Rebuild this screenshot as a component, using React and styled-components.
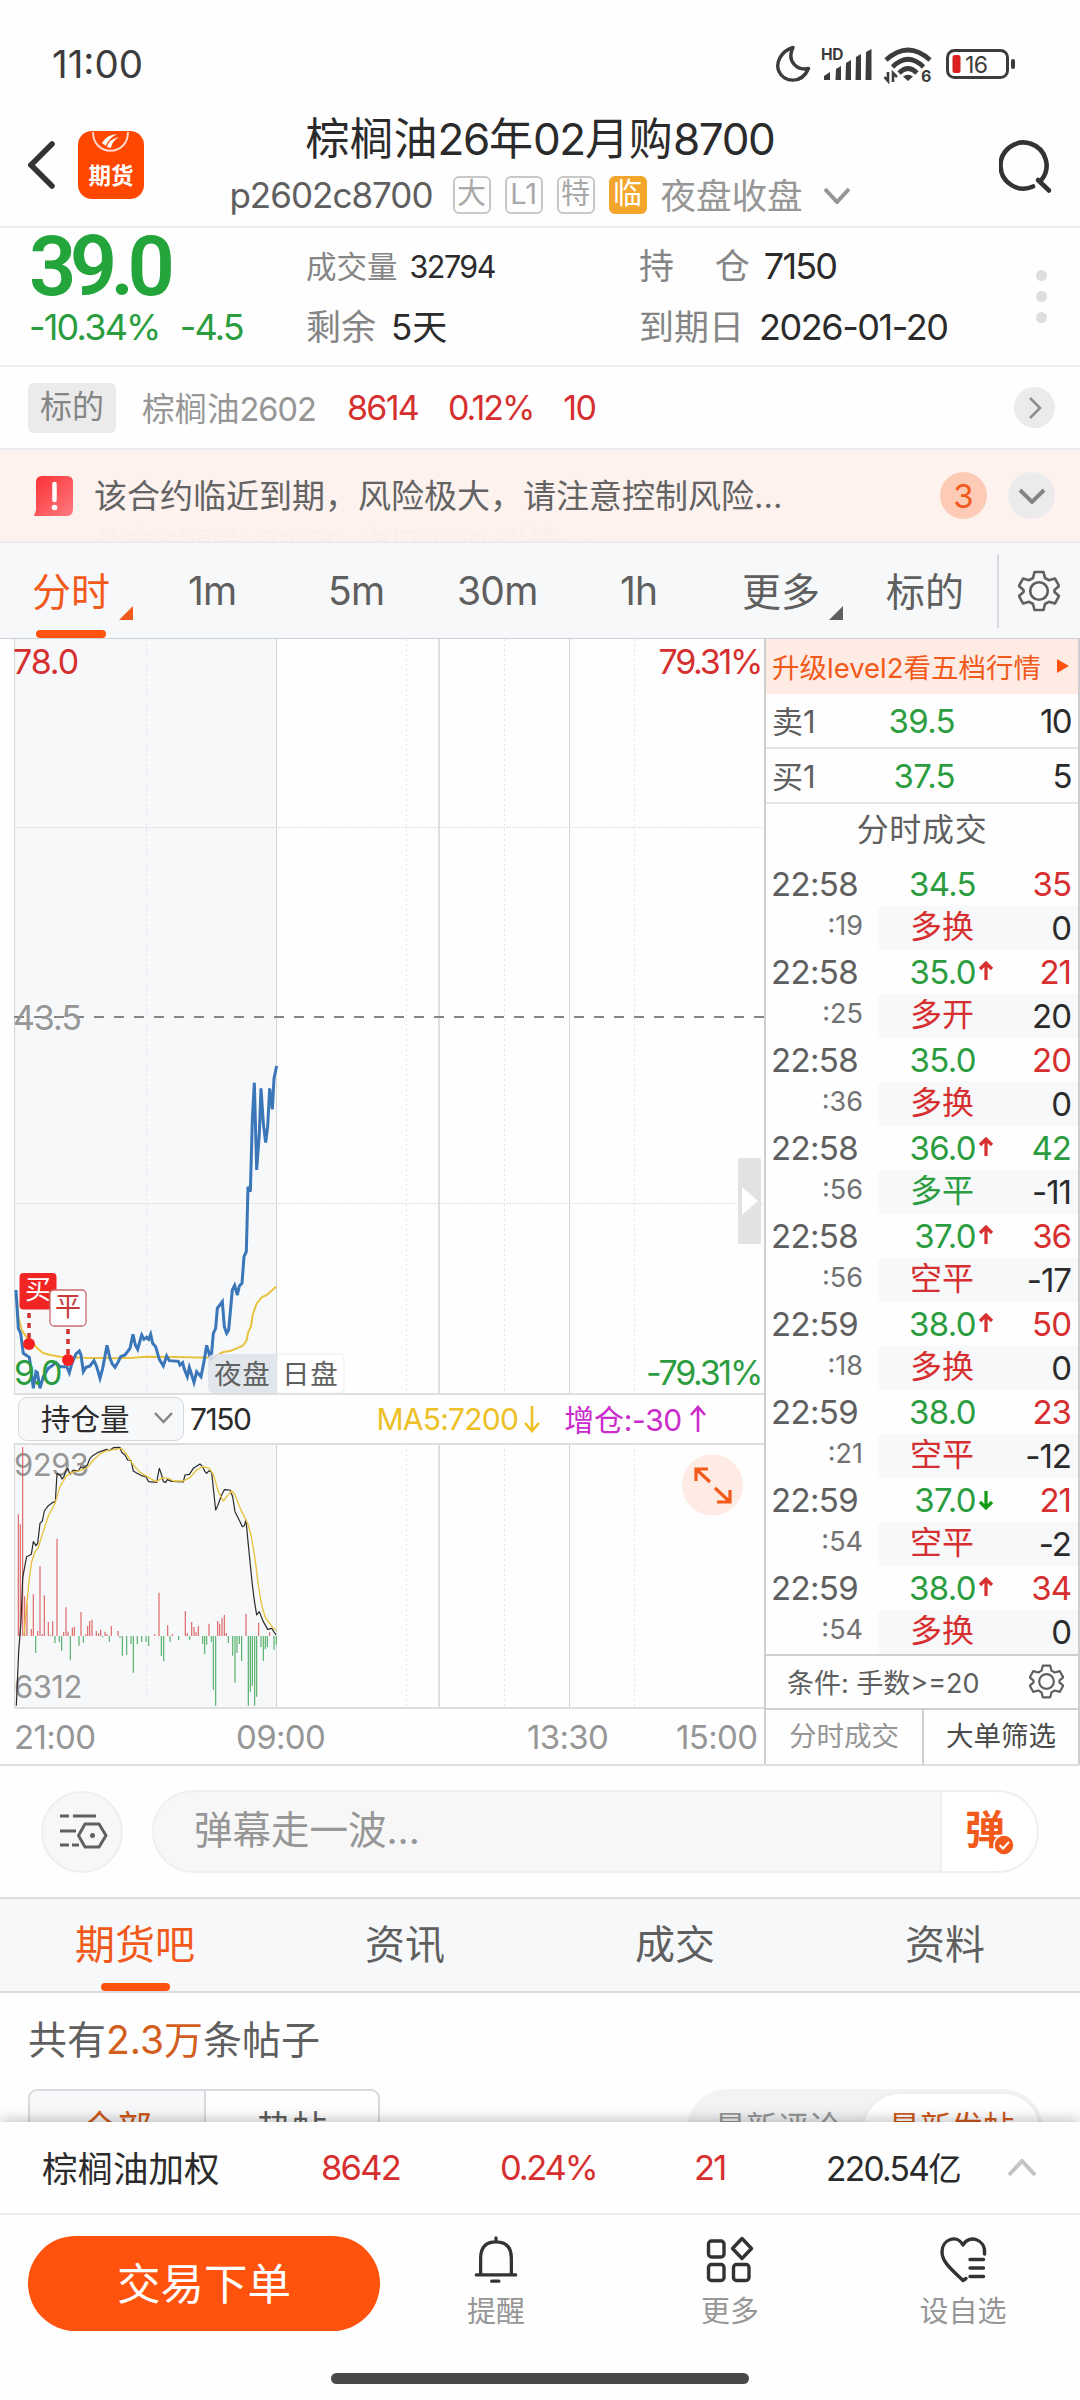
import styled, { createGlobalStyle, css } from "styled-components";

const GlobalStyle = createGlobalStyle`
  * {
    box-sizing: border-box;
  }
  body {
    margin: 0;
    background: #fefefe;
    font-family: Inter, "Noto Sans CJK SC", sans-serif;
    color: #2b2b2b;
  }
`;

const RED = "#d62f2f";
const GREEN = "#2b9d40";
const ORANGE = "#f25a1c";
const GRAY = "#969696";
const DARK = "#5f5f5f";
const BLACK = "#2b2b2b";

const Page = styled.div`
  width: 1080px;
  height: 2400px;
  overflow: hidden;
  display: flex;
  flex-direction: column;
`;

const Num = styled.span`
  font-size: ${({ $size }) => ($size ? `${$size}px` : "inherit")};
  letter-spacing: ${({ $ls }) => $ls ?? -0.05}em;
  color: ${({ $color }) => $color || "inherit"};
`;

/* ---------- status bar ---------- */

const StatusBar = styled.div`
  height: 110px;
  padding: 18px 65px 0 52px;
  display: flex;
  align-items: center;
  justify-content: space-between;
  color: #3c3c3c;
  font-size: 38.5px;
`;

/* ---------- header ---------- */

const Header = styled.header`
  height: 118px;
  display: grid;
  grid-template-columns: 200px 1fr 200px;
  border-bottom: 2px solid #ececec;
`;

const HeaderLeft = styled.div`
  display: flex;
  align-items: center;
  gap: 22px;
  padding: 0 0 6px 28px;
`;

const HeaderRight = styled.div`
  display: flex;
  align-items: center;
  justify-content: flex-end;
  padding: 0 27px 3px 0;
`;

const HeaderCenter = styled.div`
  display: flex;
  flex-direction: column;
  align-items: center;
`;

const Title = styled.div`
  font-size: 44px;
  line-height: 58px;
  white-space: nowrap;
`;

const SubTitle = styled.div`
  display: flex;
  align-items: center;
  height: 54px;
  font-size: 35px;
  color: ${GRAY};
  white-space: nowrap;
`;

const Session = styled.span`
  font-size: 35.5px;
  padding-bottom: 4px;
  margin-right: 20px;
`;

const Code = styled.span`
  color: ${DARK};
  margin-right: 20px;
  letter-spacing: -0.028em;
`;

const Badge = styled.span`
  width: 38px;
  height: 38px;
  margin-right: 14px;
  border: 2px solid ${({ $solid }) => ($solid ? "#f3a62c" : "#c8c8c8")};
  border-radius: 6px;
  background: ${({ $solid }) => ($solid ? "#f3a62c" : "transparent")};
  color: ${({ $solid }) => ($solid ? "#fff" : "#a8a8a8")};
  font-size: 29px;
  line-height: 32px;
  text-align: center;
`;

/* ---------- quote ---------- */

const Quote = styled.section`
  height: 139px;
  padding: 8px 31px 0 29px;
  display: grid;
  grid-template-columns: 277px 333px 1fr 13px;
  border-bottom: 2px solid #f0f0f0;
`;

const QuoteCol = styled.div`
  display: flex;
  flex-direction: column;
`;

const QuoteLine = styled.div`
  height: 61px;
  line-height: 61px;
  display: flex;
  align-items: center;
  white-space: nowrap;
  font-size: ${({ $size }) => $size || 35}px;
  color: ${({ $color }) => $color || BLACK};
  gap: ${({ $gap }) => $gap ?? 15}px;
`;

const Label = styled.span`
  color: #858585;
  word-spacing: 31px;
`;

const Price = styled.span`
  font-family: Roboto, sans-serif;
  font-weight: 600;
  font-size: 83px;
  letter-spacing: -0.08em;
  color: #23a53c;
`;

const Dots = styled.div`
  display: flex;
  flex-direction: column;
  gap: 10px;
  padding-top: 34px;
  i {
    width: 11px;
    height: 11px;
    border-radius: 50%;
    background: #dedede;
  }
`;

/* ---------- underlying row ---------- */

const Underlying = styled.div`
  height: 83px;
  padding: 0 25px 0 28px;
  display: flex;
  align-items: center;
  font-size: 34px;
  color: ${RED};
  border-bottom: 2px solid #ececec;
`;

const Tag = styled.span`
  width: 88px;
  height: 50px;
  line-height: 47px;
  text-align: center;
  border-radius: 6px;
  background: #ebebeb;
  color: #858585;
  font-size: 32px;
  margin-right: 26px;
`;

const UnderName = styled.span`
  color: ${GRAY};
  font-size: 32.5px;
  padding-bottom: 2px;
  margin-right: 31px;
`;

const Circle = styled.span`
  width: ${({ $size }) => $size}px;
  height: ${({ $size }) => $size}px;
  border-radius: 50%;
  background: ${({ $bg }) => $bg || "#ebebeb"};
  color: ${ORANGE};
  font-size: 33px;
  display: flex;
  align-items: center;
  justify-content: center;
  flex: none;
`;

const Spacer = styled.div`
  flex: 1;
`;

/* ---------- warning ---------- */

const Warning = styled.div`
  height: 93px;
  overflow: hidden;
  background: #fdf2ee;
  border-bottom: 2px solid #ecebea;
`;

const WarningLine = styled.div`
  height: 91px;
  padding: 0 25px 0 34px;
  display: flex;
  align-items: center;
  gap: 21px;
  white-space: nowrap;
`;

const WarningText = styled.span`
  padding-bottom: 3px;
  font-size: 33px;
  color: #636363;
`;

const NextWarning = styled.div`
  margin-top: -18px;
  padding-left: 95px;
  font-size: 31px;
  line-height: 40px;
  white-space: nowrap;
  color: #fceee9;
`;

/* ---------- period tabs ---------- */

const Periods = styled.nav`
  height: 96px;
  padding-left: 32px;
  display: flex;
  align-items: center;
  background: #f6f8fa;
  border-bottom: 1px solid #ccd0d4;
  font-size: 39px;
  color: ${DARK};
`;

const Period = styled.div`
  position: relative;
  width: ${({ $w }) => $w}px;
  padding-bottom: ${({ $latin }) => ($latin ? 0 : 4)}px;
  color: ${({ $active }) => ($active ? ORANGE : "inherit")};
  letter-spacing: ${({ $latin }) => ($latin ? -0.02 : 0)}em;
  white-space: nowrap;
  ${({ $corner }) =>
    $corner &&
    css`
      &::after {
        content: "";
        position: absolute;
        left: 87px;
        bottom: 1px;
        border: 7px solid transparent;
        border-right-color: currentColor;
        border-bottom-color: currentColor;
      }
    `}
  ${({ $active }) =>
    $active &&
    css`
      &::before {
        content: "";
        position: absolute;
        left: 4px;
        bottom: -17px;
        width: 70px;
        height: 8px;
        border-radius: 4px;
        background: #ff530d;
      }
    `}
`;

const PeriodGear = styled.div`
  height: 74px;
  width: 82px;
  display: flex;
  align-items: center;
  justify-content: center;
  border-left: 2px solid #d9dbde;
`;

/* ---------- chart ---------- */

const Trade = styled.section`
  height: 1127px;
  display: flex;
  border-bottom: 2px solid #e0e0e0;
`;

const ChartCol = styled.div`
  width: 764px;
  display: flex;
  flex-direction: column;
`;

const Svg = styled.svg`
  display: block;
  flex: none;
  font-family: Inter, "Noto Sans CJK SC", sans-serif;
`;

const IndexBar = styled.div`
  height: 48px;
  padding: 0 58px 0 18px;
  display: flex;
  align-items: center;
  font-size: 30px;
  white-space: nowrap;
`;

const Select = styled.div`
  width: 166px;
  height: 44px;
  margin-right: 6px;
  padding: 0 9px 4px 22px;
  display: flex;
  align-items: center;
  justify-content: space-between;
  border: 1px solid #d3d7dc;
  border-radius: 9px;
  background: #f6f8fa;
  font-size: 29.5px;
`;

const Times = styled.div`
  flex: 1;
  display: grid;
  grid-template-columns: 222px 291px 149px 1fr;
  padding-left: 14px;
  align-items: center;
  font-size: 33px;
  color: ${GRAY};
`;

/* ---------- order book ---------- */

const Book = styled.aside`
  width: 316px;
  border-left: 2px solid #cfcfcf;
  border-right: 2px solid #cfcfcf;
`;

const Promo = styled.div`
  height: 55px;
  padding: 0 8px 2px 6px;
  display: flex;
  align-items: center;
  justify-content: space-between;
  background: #feebe3;
  color: ${ORANGE};
  font-size: 27.5px;
  white-space: nowrap;
`;

const BookRow = styled.div`
  height: 55px;
  padding: 0 7px 0 6px;
  display: grid;
  grid-template-columns: 92px 91px 1fr;
  align-items: center;
  border-bottom: 2px solid #e5e5e5;
  font-size: 33px;
  text-align: right;
`;

const BookName = styled.span`
  color: ${DARK};
  font-size: 31px;
  padding-bottom: 2px;
  text-align: left;
`;

const BookTitle = styled.div`
  height: 58px;
  line-height: 52px;
  text-align: center;
  font-size: 32px;
  letter-spacing: 0.02em;
  color: ${DARK};
`;

const Tick = styled.div`
  height: 88px;
  display: grid;
  grid-template-columns: 112px 98px 20px 1fr;
  grid-template-rows: 44px 44px;
  align-items: center;
  font-size: 33px;
  text-align: right;
`;

const TickTime = styled.span`
  padding-left: 5px;
  text-align: left;
  color: ${DARK};
  letter-spacing: -0.02em;
`;

const TickSec = styled.span`
  padding: 0 15px 6px 0;
  font-size: 27px;
  color: #727272;
`;

const TickSide = styled.div`
  grid-column: 2 / 5;
  height: 44px;
  display: grid;
  grid-template-columns: 96px 1fr;
  align-items: center;
  border-radius: 6px 0 0 6px;
  background: #f6f8fa;
`;

const Side = styled.span`
  font-size: 32px;
  line-height: 40px;
  padding-bottom: 2px;
  color: ${({ $color }) => $color};
`;

const Amount = styled.span`
  padding-right: 7px;
  letter-spacing: -0.03em;
  color: ${({ $color }) => $color || BLACK};
`;

const TickPrice = styled.span`
  color: ${GREEN};
  letter-spacing: -0.02em;
`;

const Filter = styled.div`
  height: 54px;
  padding: 0 14px 2px 21px;
  display: flex;
  align-items: center;
  justify-content: space-between;
  border-top: 2px solid #cfcfcf;
  font-size: 27px;
  color: ${DARK};
`;

const FilterTabs = styled.div`
  height: 57px;
  display: grid;
  grid-template-columns: 1fr 1fr;
  border-top: 2px solid #cfcfcf;
`;

const FilterTab = styled.div`
  line-height: 53px;
  text-align: center;
  font-size: 27.5px;
  color: ${({ $active }) => ($active ? "#4a4a4a" : GRAY)};
  border-left: ${({ $active }) => ($active ? "2px solid #cfcfcf" : "none")};
`;

/* ---------- comment bar ---------- */

const CommentBar = styled.div`
  height: 131px;
  padding: 0 41px;
  display: flex;
  align-items: center;
  gap: 29px;
`;

const Round = styled.div`
  width: 82px;
  height: 82px;
  border-radius: 50%;
  border: 2px solid #efefef;
  background: #f7f7f7;
  display: flex;
  align-items: center;
  justify-content: center;
  padding-left: 3px;
`;

const Input = styled.div`
  flex: 1;
  height: 83px;
  display: flex;
  overflow: hidden;
  border: 2px solid #efefef;
  border-radius: 42px;
  background: #f7f7f7;
  font-size: 38.5px;
  line-height: 76px;
  color: ${GRAY};
  padding-left: 40px;
`;

const Bullet = styled.div`
  position: relative;
  width: 97px;
  padding-left: 23px;
  margin-left: auto;
  background: #fff;
  border-left: 2px solid #efefef;
  color: ${ORANGE};
  font-size: 40px;
  font-weight: 700;
  svg {
    position: absolute;
    left: 51px;
    top: 42px;
  }
`;

/* ---------- forum ---------- */

const ForumTabs = styled.nav`
  height: 96px;
  display: grid;
  grid-template-columns: repeat(4, 1fr);
  background: #f6f8fa;
  border-top: 2px solid #dcdcdc;
  border-bottom: 2px solid #dcdcdc;
`;

const ForumTab = styled.div`
  display: flex;
  flex-direction: column;
  align-items: center;
  justify-content: space-between;
  font-size: 40px;
  line-height: 92px;
  height: 92px;
  color: ${({ $active }) => ($active ? ORANGE : DARK)};
  &::after {
    content: "";
    width: 69px;
    height: 8px;
    margin-top: -10px;
    flex: none;
    border-radius: 4px;
    background: ${({ $active }) => ($active ? "#ff530d" : "transparent")};
  }
`;

const Forum = styled.section`
  height: 129px;
  padding: 0 37px 0 28px;
  overflow: hidden;
`;

const Count = styled.div`
  height: 96px;
  line-height: 93px;
  font-size: 39px;
  color: ${DARK};
  em {
    font-style: normal;
    color: #d35f1e;
  }
`;

const FilterRow = styled.div`
  display: flex;
  justify-content: space-between;
`;

const Segment = styled.div`
  width: 352px;
  height: 80px;
  display: grid;
  grid-template-columns: 176px 1fr;
  border: 2px solid #d8dadd;
  border-radius: 9px;
  overflow: hidden;
  font-size: 35px;
  line-height: 75px;
  text-align: center;
  color: ${DARK};
`;

const SegmentItem = styled.span`
  background: ${({ $active }) => ($active ? "#f6f8fa" : "transparent")};
  color: ${({ $active }) => ($active ? "#cf5a1c" : "inherit")};
  border-right: ${({ $active }) => ($active ? "2px solid #d8dadd" : "none")};
`;

const Toggle = styled.div`
  width: 356px;
  height: 80px;
  padding: 5px 4px;
  display: grid;
  grid-template-columns: 173px 175px;
  border-radius: 40px;
  background: #f1f3f5;
  font-size: 31.5px;
  line-height: 68px;
  text-align: center;
  color: ${GRAY};
`;

const ToggleItem = styled.span`
  border-radius: 36px;
  background: ${({ $active }) => ($active ? "#fff" : "transparent")};
  color: ${({ $active }) => ($active ? "#cf5a1c" : "inherit")};
  box-shadow: ${({ $active }) => ($active ? "0 0 6px rgba(0,0,0,.06)" : "none")};
`;

/* ---------- footer ---------- */

const Footer = styled.footer`
  position: relative;
  flex: 1;
  background: #fefefe;
  box-shadow: 0 -1px 14px rgba(0, 0, 0, 0.28);
`;

const IndexRow = styled.div`
  height: 93px;
  padding-left: 42px;
  display: grid;
  grid-template-columns: 279px 179px 194px 132px 181px 1fr;
  align-items: center;
  border-bottom: 2px solid #ececec;
  font-size: 34.5px;
  color: ${RED};
  white-space: nowrap;
`;

const IndexName = styled.span`
  color: ${BLACK};
  padding-bottom: 3px;
  font-size: ${({ $size }) => $size}px;
`;

const Actions = styled.div`
  height: 116px;
  padding: 21px 0 0 28px;
  display: grid;
  grid-template-columns: 352px 232px 236px 230px;
  align-items: start;
`;

const Order = styled.button`
  height: 95px;
  border: 0;
  padding: 0 0 5px;
  border-radius: 48px;
  background: #ff530d;
  color: #fff;
  font: inherit;
  font-size: 43.5px;
`;

const Action = styled.div`
  display: flex;
  flex-direction: column;
  align-items: center;
  margin-top: -1px;
  font-size: 29px;
  line-height: 46px;
  color: ${GRAY};
`;

const HomeBar = styled.div`
  width: 418px;
  height: 11px;
  margin: 42px auto 0;
  border-radius: 6px;
  background: #484848;
`;

/* ---------- data ---------- */

const ticks = [
  ["22:58", ":19", "34.5", "", "35", RED, "多换", RED, "0"],
  ["22:58", ":25", "35.0", "up", "21", RED, "多开", RED, "20"],
  ["22:58", ":36", "35.0", "", "20", RED, "多换", RED, "0"],
  ["22:58", ":56", "36.0", "up", "42", GREEN, "多平", GREEN, "-11"],
  ["22:58", ":56", "37.0", "up", "36", RED, "空平", RED, "-17"],
  ["22:59", ":18", "38.0", "up", "50", RED, "多换", RED, "0"],
  ["22:59", ":21", "38.0", "", "23", RED, "空平", RED, "-12"],
  ["22:59", ":54", "37.0", "down", "21", RED, "空平", RED, "-2"],
  ["22:59", ":54", "38.0", "up", "34", RED, "多换", RED, "0"],
];

const pricePoints =
  "48,870 55,985 62,1000 70,1060 88,1072 92,1100 100,1165 108,1115 112,1118 120,1165 130,1130 145,1105 155,1098 168,1088 180,1100 200,1100 208,1118 215,1092 228,1062 238,1053 243,1065 250,1115 258,1102 270,1098 282,1082 290,1100 300,1135 308,1105 321,1036 330,1075 337,1092 345,1102 355,1085 362,1070 375,1065 390,1045 399,1003 406,1035 413,1048 425,1005 432,1018 440,1012 446,1018 452,1003 458,1030 467,1040 478,1078 490,1098 500,1068 508,1082 535,1084 540,1095 548,1088 553,1108 562,1130 568,1102 582,1147 590,1115 603,1130 612,1085 620,1036 633,1080 640,1000 647,985 652,925 667,905 673,980 680,1000 686,990 697,870 704,856 712,885 718,858 726,850 732,770 739,755 744,560 751,575 757,360 763,248 770,510 778,400 783,265 790,370 797,428 803,380 809,265 817,328 822,235 830,198";
const averagePoints =
  "50,890 55,950 65,990 80,1012 100,1030 115,1048 130,1060 155,1066 180,1070 240,1073 350,1075 400,1073 440,1070 520,1071 640,1073 655,1064 670,1056 690,1053 710,1045 730,1036 740,1020 745,995 753,980 758,945 770,910 785,892 800,885 815,872 828,860";
const holdPoints =
  "49,812 56,650 63,560 68,430 75,390 80,365 94,358 100,320 108,332 113,325 120,265 127,258 133,228 145,212 157,203 166,200 171,116 180,120 186,132 192,125 197,108 203,100 210,118 220,105 235,108 243,95 250,100 262,90 270,70 278,62 295,52 320,43 327,47 340,38 360,37 365,52 375,60 383,75 393,77 400,108 410,114 425,122 438,126 446,140 470,142 478,100 485,120 490,140 497,142 502,134 515,139 550,141 555,120 568,118 580,100 600,87 608,95 615,110 620,115 627,107 635,112 640,160 647,225 653,212 665,180 673,164 690,165 698,185 705,230 715,250 727,275 733,272 738,255 745,330 756,440 762,490 770,540 778,530 790,560 803,583 815,580 828,600";
const holdAverage =
  "72,600 80,510 88,430 95,380 105,350 115,338 128,295 145,243 165,205 180,155 200,122 215,112 240,107 262,98 280,75 300,57 320,47 365,40 380,58 400,90 420,112 440,124 468,140 490,128 505,130 520,138 550,138 570,128 590,105 608,95 628,100 640,118 655,170 670,198 680,185 695,168 705,180 725,230 745,270 755,310 765,370 775,450 785,510 795,545 805,560 820,580 828,586";

const BAR_ZERO = 603;
const bars = [
  [55, 238], [61, 268], [68, 36], [74, 484], [81, 507], [94, 582], [100, 478], [107, 654],
  [113, 588], [120, 394], [127, 598], [133, 481], [145, 561], [152, 600], [158, 559],
  [165, 624], [171, 311], [178, 620], [185, 647], [191, 591], [198, 517], [204, 590],
  [211, 676], [217, 578], [223, 575], [237, 632], [243, 531], [250, 623], [257, 598],
  [263, 573], [269, 558], [276, 554], [289, 588], [296, 595], [302, 584], [308, 607],
  [315, 590], [321, 597], [328, 621], [334, 573], [354, 588], [360, 608], [367, 662],
  [380, 660], [393, 627], [400, 713], [412, 627], [425, 621], [438, 620], [446, 633],
  [464, 598], [477, 473], [484, 663], [491, 679], [503, 571], [510, 621], [517, 597],
  [536, 615], [556, 528], [562, 594], [569, 616], [575, 561], [582, 576], [588, 592],
  [595, 573], [608, 627], [614, 657], [620, 629], [627, 566], [634, 620], [640, 765],
  [647, 812], [653, 558], [659, 566], [666, 549], [673, 540], [679, 594], [685, 624],
  [698, 662], [705, 743], [711, 654], [718, 627], [725, 678], [738, 536], [745, 812],
  [751, 770], [757, 752], [764, 812], [770, 785], [776, 563], [783, 636], [790, 678],
  [796, 643], [802, 636], [809, 592], [822, 644], [829, 629],
];

/* ---------- icons ---------- */

const Chevron = ({ w, h, color, stroke = 3, flip }) => (
  <svg width={w} height={h} viewBox={`0 0 ${w} ${h}`} fill="none">
    <path
      d={
        flip
          ? `M2 ${h - 2} L${w / 2} 2 L${w - 2} ${h - 2}`
          : `M2 2 L${w / 2} ${h - 2} L${w - 2} 2`
      }
      stroke={color}
      strokeWidth={stroke}
    />
  </svg>
);

const Gear = ({ size }) => (
  <svg width={size} height={size} viewBox="0 0 42 42" fill="none" stroke="#5f5f5f" strokeWidth="2.6">
    <path
      strokeLinejoin="round"
      d="M16.5 2 H25.5 L27 8 L30.8 10.2 L37 8.6 L41 16 L36.5 20 V22 L41 26 L37 33.4 L30.8 31.8 L27 34 L25.5 40 H16.5 L15 34 L11.2 31.8 L5 33.4 L1 26 L5.5 22 V20 L1 16 L5 8.6 L11.2 10.2 L15 8 Z"
    />
    <circle cx="21" cy="21" r="8.8" />
  </svg>
);

const StatusIcons = () => (
  <svg width="240" height="40" viewBox="775 44 240 40" fill="#3c3c3c">
    <path
      d="M793 47.5 C781 51 775 63 779 71.5 C784 83 802 84 808.5 68.5 C798 71 786 62 793 47.5 Z"
      fill="none"
      stroke="#3c3c3c"
      strokeWidth="3.4"
      strokeLinejoin="round"
    />
    <text x="821" y="60" fontSize="15.5" fontWeight="700" letterSpacing="-0.3">HD</text>
    <path d="M824 76 L830 72 V80 H824 Z M836 69 L841 66 V80 H835.5 Z M846 63 L851 60 V80 H845.5 Z M856 57 L861 54 V80 H855.5 Z M866 52 L871.5 49 V80 H865.5 Z" />
    <g fill="none" stroke="#3c3c3c" strokeWidth="4.6">
      <path d="M886 60 Q908 40 930 60" />
      <path d="M892.5 67 Q908 51.5 923.5 67" />
      <path d="M899 73 Q908 64 917 73" />
    </g>
    <path d="M903 76.5 Q908 73 913 76.5 L908 81 Z" />
    <path d="M888 72 V81 L884.5 77 M893 82 V73 L897 77" fill="none" stroke="#3c3c3c" strokeWidth="2.6" />
    <text x="921" y="82" fontSize="16" fontWeight="700">6</text>
    <rect x="947.5" y="50.5" width="60" height="27" rx="7" fill="none" stroke="#3c3c3c" strokeWidth="3" />
    <rect x="952.5" y="55" width="8" height="18" rx="2.5" fill="#dc1f1f" />
    <text x="965" y="72.5" fontSize="23" letterSpacing="-0.5">16</text>
    <rect x="1011" y="59" width="4" height="10" rx="2" />
  </svg>
);

const Logo = () => (
  <svg width="66" height="68" viewBox="0 0 66 68">
    <rect width="66" height="68" rx="14" fill="#ff4700" />
    <path d="M15 1 C15 26 50 26 50 1" fill="none" stroke="#ffd9cc" strokeWidth="2" />
    <path d="M24 12 Q28 4 39 3 Q30 8 28 15 Z M29 16 Q31 8 41 6 Q34 10 33 17 Z" fill="#fff" />
    <text x="33" y="53" fontSize="22.5" fontWeight="700" fill="#fff" textAnchor="middle" fontFamily="Noto Sans CJK SC">
      期货
    </text>
  </svg>
);

const TickArrow = ({ dir }) => (
  <svg width="20" height="24" viewBox="0 0 20 24" fill="none" strokeWidth="3.2" stroke={dir === "up" ? RED : "#129a12"}>
    {dir === "up" && <path d="M10 20 V3 M4 9 L10 3 L16 9" />}
    {dir === "down" && <path d="M10 3 V20 M4 14 L10 20 L16 14" />}
  </svg>
);

const iconStroke = { fill: "none", stroke: "#333", strokeWidth: 3.4, strokeLinecap: "round", strokeLinejoin: "round" };

const Grid = ({ top, bottom }) => (
  <>
    <rect x="14" y={top} width="262" height={bottom - top} fill="#f6f8fa" />
    <path
      d={`M146.5 ${top} V${bottom} M406.5 ${top} V${bottom} M504.5 ${top} V${bottom} M634.5 ${top} V${bottom}`}
      stroke="#e3e5e8"
      strokeDasharray="2 3"
    />
    <path d={`M14.5 ${top} V${bottom} M276.5 ${top} V${bottom} M569.5 ${top} V${bottom}`} stroke="#d3d5d8" fill="none" />
    <path d={`M439 ${top} V${bottom}`} stroke="#dddfe1" strokeWidth="2" />
  </>
);

const PriceChart = () => (
  <Svg width="764" height="756" viewBox="0 639 764 756">
    <Grid top={639} bottom={1394} />
    <path d="M14 827.5 H764 M14 1203.5 H764" stroke="#dcdee0" strokeDasharray="2 1" />
    <path d="M14 1017 H764" stroke="#858585" strokeWidth="2" strokeDasharray="10 10" />
    <path d="M14 1394 H764" stroke="#dcdee0" strokeWidth="2" />
    <g fontSize="34" letterSpacing="-1.1">
      <text x="13" y="674" fill={RED}>78.0</text>
      <text x="761" y="674" fill={RED} textAnchor="end" letterSpacing="-2.3">79.31%</text>
      <text x="13" y="1030" fill={GRAY}>43.5</text>
    </g>
    <g transform="translate(0 1000) scale(0.33333)" fill="none">
      <polyline points={averagePoints} stroke="#e8c23c" strokeWidth="6" strokeLinejoin="round" />
      <polyline points={pricePoints} stroke="#3a76b8" strokeWidth="9" />
    </g>
    <g fontSize="34" fill={GREEN}>
      <text x="14" y="1385" letterSpacing="-1.1">9.0</text>
      <text x="761" y="1385" textAnchor="end" letterSpacing="-2.3">-79.31%</text>
    </g>
    <path d="M276 1354 H215 Q208 1354 208 1361 V1387 Q208 1393 214 1393 H276 Z" fill="#dfe3eb" fillOpacity="0.9" />
    <path d="M277 1354 H338 Q344 1354 344 1360 V1387 Q344 1393 338 1393 H277 Z" fill="#fff" stroke="#eceef0" />
    <g fontSize="27.5" fill={DARK} letterSpacing="0.8">
      <text x="214" y="1384">夜盘</text>
      <text x="282" y="1384">日盘</text>
    </g>
    <path d="M29 1313 V1344 M68 1329 V1360" stroke={RED} strokeWidth="3.5" strokeDasharray="5 5" />
    <circle cx="29" cy="1344" r="6" fill="#f72020" />
    <circle cx="68" cy="1360" r="6" fill="#f72020" />
    <rect x="19.5" y="1273" width="37" height="36.5" rx="4" fill="#f22525" />
    <text x="38" y="1299" fontSize="26" fill="#fff" textAnchor="middle">买</text>
    <rect x="50" y="1290" width="36" height="36" rx="4" fill="#fff" stroke="#c96a6a" strokeWidth="1.3" />
    <text x="68" y="1316" fontSize="26" fill="#c73838" textAnchor="middle">平</text>
    <rect x="738" y="1158" width="23" height="86" rx="2" fill="#e2e2e2" />
    <path d="M742 1187 L758 1201 L742 1215 Z" fill="#fff" />
  </Svg>
);

const HoldChart = () => (
  <Svg width="764" height="266" viewBox="0 1443 764 266">
    <Grid top={1444} bottom={1708} />
    <path d="M14 1444 H764 M14 1708 H764" stroke="#dcdee0" strokeWidth="2" />
    <g fontSize="31" letterSpacing="-0.5" fill={GRAY}>
      <text x="14" y="1476">9293</text>
      <text x="14" y="1698">6312</text>
    </g>
    <g transform="translate(0 1435) scale(0.33333)" fill="none">
      {bars.map(([x, y]) => (
        <path key={x} d={`M${x} ${BAR_ZERO} V${y}`} stroke={y < BAR_ZERO ? "#dd6565" : "#55b069"} strokeWidth="3.5" />
      ))}
      <polyline points={holdPoints} stroke="#2b2b2b" strokeWidth="3.6" strokeLinejoin="round" />
      <polyline points={holdAverage} stroke="#e8c23c" strokeWidth="4" strokeLinejoin="round" />
    </g>
    <circle cx="712.5" cy="1485" r="30.5" fill="#feebe3" />
    <path
      d="M710 1482 L697 1470 M696 1481 V1469 H708 M715 1488 L729 1501 M730 1490 V1502 H717"
      fill="none"
      stroke={ORANGE}
      strokeWidth="3.2"
    />
  </Svg>
);

/* ---------- page ---------- */

const MaValue = styled(Num)`
  margin-right: 5px;
`;

const HoldChange = styled(Num)`
  margin: 0 8px 2px 23px;
`;

const UnderValue = styled(Num)`
  margin-right: 30px;
`;

const App = () => (
  <>
    <GlobalStyle />
    <Page>
      <StatusBar>
        <Num $ls={0}>11:00</Num>
        <StatusIcons />
      </StatusBar>

      <Header>
        <HeaderLeft>
          <svg width="28" height="50" viewBox="0 0 28 50" fill="none">
            <path d="M24 4 L3 25 L24 46" stroke="#333" strokeWidth="5.5" strokeLinecap="round" />
          </svg>
          <Logo />
        </HeaderLeft>
        <HeaderCenter>
          <Title>
            棕榈油<Num $ls={-0.03}>26</Num>年<Num $ls={-0.03}>02</Num>月购<Num $ls={-0.03}>8700</Num>
          </Title>
          <SubTitle>
            <Code>p2602c8700</Code>
            <Badge>大</Badge>
            <Badge>L1</Badge>
            <Badge>特</Badge>
            <Badge $solid>临</Badge>
            <Session>夜盘收盘</Session>
            <Chevron w={28} h={17} color={GRAY} stroke={4} />
          </SubTitle>
        </HeaderCenter>
        <HeaderRight>
          <svg width="54" height="54" viewBox="0 0 54 54" fill="none" stroke="#333" strokeWidth="4.6" strokeLinecap="round">
            <path d="M34 46.5 A23 23 0 1 1 42 40.5" />
            <path d="M39 40 L50 50.5" />
          </svg>
        </HeaderRight>
      </Header>

      <Quote>
        <QuoteCol>
          <QuoteLine>
            <Price>39.0</Price>
          </QuoteLine>
          <QuoteLine $color={GREEN} $gap={20} $size={36}>
            <Num>-10.34%</Num>
            <Num>-4.5</Num>
          </QuoteLine>
        </QuoteCol>
        <QuoteCol>
          <QuoteLine $size={30.5} $gap={12}>
            <Label>成交量</Label>
            <Num>32794</Num>
          </QuoteLine>
          <QuoteLine>
            <Label>剩余</Label>
            <span>5天</span>
          </QuoteLine>
        </QuoteCol>
        <QuoteCol>
          <QuoteLine $gap={14}>
            <Label>持 仓</Label>
            <Num $size={36}>7150</Num>
          </QuoteLine>
          <QuoteLine>
            <Label>到期日</Label>
            <Num $size={36} $ls={-0.04}>2026-01-20</Num>
          </QuoteLine>
        </QuoteCol>
        <Dots>
          <i />
          <i />
          <i />
        </Dots>
      </Quote>

      <Underlying>
        <Tag>标的</Tag>
        <UnderName>
          棕榈油<Num $ls={-0.03}>2602</Num>
        </UnderName>
        <UnderValue>8614</UnderValue>
        <UnderValue $ls={-0.06}>0.12%</UnderValue>
        <Num>10</Num>
        <Spacer />
        <Circle $size={41}>
          <svg width="14" height="24" viewBox="0 0 14 24" fill="none">
            <path d="M2 2 L12 12 L2 22" stroke="#8e8e8e" strokeWidth="2.6" />
          </svg>
        </Circle>
      </Underlying>

      <Warning>
        <WarningLine>
          <svg width="39" height="40" viewBox="0 0 39 40">
            <defs>
              <linearGradient id="alert" x1="0" y1="0" x2="1" y2="1">
                <stop offset="0" stopColor="#fb2f36" />
                <stop offset="1" stopColor="#fd7b7e" />
              </linearGradient>
            </defs>
            <path d="M8 0 H33 Q39 0 39 6 V33 Q39 40 33 40 H0 L2 34 V6 Q2 0 8 0 Z" fill="url(#alert)" />
            <path d="M20.5 8 V24" stroke="#fff" strokeWidth="4.5" strokeLinecap="round" />
            <circle cx="20.5" cy="31.5" r="2.8" fill="#fff" />
          </svg>
          <WarningText>该合约临近到期，风险极大，请注意控制风险...</WarningText>
          <Spacer />
          <Circle $size={47} $bg="#fdcbb5">3</Circle>
          <Circle $size={47}>
            <Chevron w={28} h={16} color="#858585" stroke={4} />
          </Circle>
        </WarningLine>
        <NextWarning>休市时间为 23:00-次日9:00 详情&gt;&gt;</NextWarning>
      </Warning>

      <Periods>
        <Period $w={156} $active $corner>分时</Period>
        <Period $w={140} $latin>1m</Period>
        <Period $w={129} $latin>5m</Period>
        <Period $w={163} $latin>30m</Period>
        <Period $w={122} $latin>1h</Period>
        <Period $w={144} $corner>更多</Period>
        <Period $w={111}>标的</Period>
        <PeriodGear>
          <Gear size={42} />
        </PeriodGear>
      </Periods>

      <Trade>
        <ChartCol>
          <PriceChart />
          <IndexBar>
            <Select>
              持仓量
              <Chevron w={21} h={13} color="#858585" stroke={2.5} />
            </Select>
            <Num>7150</Num>
            <Spacer />
            <MaValue $color="#ecc026" $ls={-0.025}>MA5:7200</MaValue>
            <svg width="18" height="28" viewBox="0 0 18 28" fill="none" stroke="#ecc026" strokeWidth="2.6">
              <path d="M9 1 V26 M2 18 L9 26 L16 18" />
            </svg>
            <HoldChange $color="#cb2ccc" $ls={-0.01}>增仓:-30</HoldChange>
            <svg width="16" height="28" viewBox="0 0 16 28" fill="none" stroke="#cb2ccc" strokeWidth="2.6">
              <path d="M8 27 V2 M1 10 L8 2 L15 10" />
            </svg>
          </IndexBar>
          <HoldChart />
          <Times>
            <Num $ls={-0.02}>21:00</Num>
            <Num $ls={-0.02}>09:00</Num>
            <Num $ls={-0.02}>13:30</Num>
            <Num $ls={-0.02}>15:00</Num>
          </Times>
        </ChartCol>

        <Book>
          <Promo>
            <span>升级level2看五档行情</span>
            <svg width="13" height="14">
              <path d="M0 0 L12 7 L0 14 Z" fill="#ff530d" />
            </svg>
          </Promo>
          <BookRow>
            <BookName>卖1</BookName>
            <Num $color={GREEN} $ls={-0.02}>39.5</Num>
            <Num>10</Num>
          </BookRow>
          <BookRow>
            <BookName>买1</BookName>
            <Num $color={GREEN} $ls={-0.02}>37.5</Num>
            <Num>5</Num>
          </BookRow>
          <BookTitle>分时成交</BookTitle>
          {ticks.map(([time, sec, price, dir, vol, volColor, side, sideColor, diff], i) => (
            <Tick key={i}>
              <TickTime>{time}</TickTime>
              <TickPrice>{price}</TickPrice>
              <TickArrow dir={dir} />
              <Amount $color={volColor}>{vol}</Amount>
              <TickSec>{sec}</TickSec>
              <TickSide>
                <Side $color={sideColor}>{side}</Side>
                <Amount>{diff}</Amount>
              </TickSide>
            </Tick>
          ))}
          <Filter>
            <span>条件: 手数&gt;=20</span>
            <Gear size={35} />
          </Filter>
          <FilterTabs>
            <FilterTab>分时成交</FilterTab>
            <FilterTab $active>大单筛选</FilterTab>
          </FilterTabs>
        </Book>
      </Trade>

      <CommentBar>
        <Round>
          <svg width="50" height="40" viewBox="0 0 50 40" fill="none" stroke="#606060" strokeWidth="3">
            <path d="M1 4 H10 M14 4 H37 M1 19 H17 M1 33 H10 M13 33 H20" />
            <path d="M26 12 H40 L47 23.5 L40 35 H26 L19.5 23.5 Z" strokeLinejoin="round" />
            <circle cx="33.5" cy="23.5" r="2.5" fill="#606060" stroke="none" />
          </svg>
        </Round>
        <Input>
          弹幕走一波...
          <Bullet>
            弹
            <svg width="22" height="22" viewBox="0 0 22 22">
              <circle cx="11" cy="11" r="10" fill={ORANGE} stroke="#fff" strokeWidth="1.5" />
              <path d="M6.5 11 L10 14.5 L16 8" fill="none" stroke="#fff" strokeWidth="2" />
            </svg>
          </Bullet>
        </Input>
      </CommentBar>

      <ForumTabs>
        <ForumTab $active>期货吧</ForumTab>
        <ForumTab>资讯</ForumTab>
        <ForumTab>成交</ForumTab>
        <ForumTab>资料</ForumTab>
      </ForumTabs>

      <Forum>
        <Count>
          共有<em>2.3万</em>条帖子
        </Count>
        <FilterRow>
          <Segment>
            <SegmentItem $active>全部</SegmentItem>
            <SegmentItem>热帖</SegmentItem>
          </Segment>
          <Toggle>
            <ToggleItem>最新评论</ToggleItem>
            <ToggleItem $active>最新发帖</ToggleItem>
          </Toggle>
        </FilterRow>
      </Forum>

      <Footer>
        <IndexRow>
          <IndexName $size={35.5}>棕榈油加权</IndexName>
          <Num>8642</Num>
          <Num $ls={-0.065}>0.24%</Num>
          <Num>21</Num>
          <IndexName $size={33.5}>
            <Num>220.54</Num>亿
          </IndexName>
          <Chevron w={30} h={18} color="#c4c4c4" stroke={4} flip />
        </IndexRow>
        <Actions>
          <Order>交易下单</Order>
          <Action>
            <svg width="48" height="54" viewBox="471 2236 50 54" {...iconStroke}>
              <path d="M496 2238 V2242 M480 2276 V2259 Q480 2242 496 2242 Q512 2242 512 2259 V2276 M475.5 2276.5 H516.5 M491.5 2283 H499" />
            </svg>
            提醒
          </Action>
          <Action>
            <svg width="50" height="54" viewBox="704 2235 50 54" {...iconStroke}>
              <rect x="707.5" y="2241" width="15.5" height="16" rx="3" />
              <rect x="707.5" y="2264.5" width="15.5" height="16" rx="3" />
              <rect x="732.5" y="2264.5" width="15.5" height="16" rx="3" />
              <path d="M741 2238.5 L750.5 2248.5 L741 2258.5 L731.5 2248.5 Z" />
            </svg>
            更多
          </Action>
          <Action>
            <svg width="50" height="54" viewBox="937 2235 50 54" {...iconStroke}>
              <path d="M965 2278.5 L962 2280.5 C951 2270 941 2262 941 2252 C941 2239 956 2234 962 2245 C968 2234 985 2239 983.5 2254 M969 2259.5 H982.5 M969 2268 H982.5 M969 2276.5 H982.5" />
            </svg>
            设自选
          </Action>
        </Actions>
        <HomeBar />
      </Footer>
    </Page>
  </>
);

export default App;
